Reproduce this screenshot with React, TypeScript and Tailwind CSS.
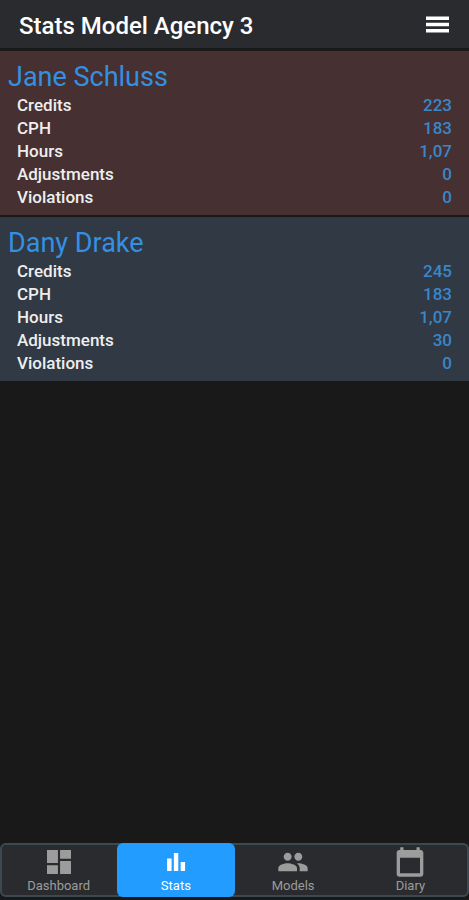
interface Stat {
  label: string;
  value: string;
}

interface ModelCardProps {
  name: string;
  color: string;
  stats: Stat[];
}

interface Tab {
  label: string;
  path: string;
  active?: boolean;
}

const models: ModelCardProps[] = [
  {
    name: 'Jane Schluss',
    color: 'bg-[#463031]',
    stats: [
      { label: 'Credits', value: '223' },
      { label: 'CPH', value: '183' },
      { label: 'Hours', value: '1,07' },
      { label: 'Adjustments', value: '0' },
      { label: 'Violations', value: '0' },
    ],
  },
  {
    name: 'Dany Drake',
    color: 'bg-[#303944]',
    stats: [
      { label: 'Credits', value: '245' },
      { label: 'CPH', value: '183' },
      { label: 'Hours', value: '1,07' },
      { label: 'Adjustments', value: '30' },
      { label: 'Violations', value: '0' },
    ],
  },
];

// Icon paths are drawn on a 24x24 grid
const tabs: Tab[] = [
  {
    label: 'Dashboard',
    path: 'M3 3h8.2v9.8H3zM3 14.4h8.2V21H3zM12.8 3H21v6.6h-8.2zM12.8 11.2H21V21h-8.2z',
  },
  {
    label: 'Stats',
    path: 'M5.3 9.4h3.4v9.4H5.3zM10.4 5.2h3.3v13.6h-3.3zM15.5 12h3.3v6.8h-3.3z',
    active: true,
  },
  {
    label: 'Models',
    path: 'M16 11c1.66 0 2.99-1.34 2.99-3S17.66 5 16 5s-3 1.34-3 3 1.34 3 3 3zm-8 0c1.66 0 2.99-1.34 2.99-3S9.66 5 8 5 5 6.34 5 8s1.34 3 3 3zm0 2c-2.33 0-7 1.17-7 3.5V19h14v-2.5c0-2.33-4.67-3.5-7-3.5zm8 0c-.29 0-.62.02-.97.05C16.19 13.89 17 15.02 17 16.5V19h6v-2.5c0-2.33-4.67-3.5-7-3.5z',
  },
  {
    label: 'Diary',
    path: 'M20 3h-.7V1h-2.4v2H7.1V1H4.7v2H4c-1.1 0-2 .9-2 2v16c0 1.1.9 2 2 2h16c1.1 0 2-.9 2-2V5c0-1.1-.9-2-2-2zm-.5 17.5h-15V8.8h15z',
  },
];

const ModelCard = ({ name, color, stats }: ModelCardProps) => (
  <section className={`${color} px-2 pt-[9px] pb-[6px]`}>
    <h2 className="text-[27px] leading-[34px] text-[#3390e3]">{name}</h2>
    <dl className="px-[9px] text-[17px] leading-[23px] font-medium">
      {stats.map((stat) => (
        <div key={stat.label} className="flex justify-between">
          <dt className="text-[#eeeeee]">{stat.label}</dt>
          <dd className="text-[#3b86c8]">{stat.value}</dd>
        </div>
      ))}
    </dl>
  </section>
);

export default function App() {
  return (
    <div className="flex min-h-screen flex-col bg-[#191919] font-[Roboto,sans-serif]">
      <header className="flex h-[51px] items-center justify-between border-b-3 border-[#191919] bg-[#292b2e] pr-5 pl-[19px]">
        <h1 className="pt-1 text-[24px] leading-8 font-medium text-white">Stats Model Agency 3</h1>
        <button type="button" aria-label="Open menu" className="text-white">
          <svg width="23" height="17" viewBox="0 0 23 17" fill="currentColor">
            <path d="M0 .5h23v3.5H0zM0 6.8h23v3.5H0zM0 13h23v3.5H0z" />
          </svg>
        </button>
      </header>

      <main className="flex flex-1 flex-col gap-[2px]">
        {models.map((model) => (
          <ModelCard key={model.name} {...model} />
        ))}
      </main>

      {/* Bottom tab bar */}
      <nav className="mb-[3px] grid grid-cols-4 rounded-md bg-[#292b2e] inset-ring-2 inset-ring-[#3b4a50]">
        {tabs.map(({ label, path, active }) => (
          <button
            key={label}
            type="button"
            aria-current={active ? 'page' : undefined}
            className={`flex flex-col items-center rounded-md pt-[3px] pb-1 ${active ? 'bg-[#229cff] text-white' : 'text-[#9c9c9c]'}`}
          >
            <svg className="size-8" viewBox="0 0 24 24" fill="currentColor" aria-hidden="true">
              <path d={path} />
            </svg>
            <span className="text-[13px] leading-[15px]">{label}</span>
          </button>
        ))}
      </nav>
    </div>
  );
}
